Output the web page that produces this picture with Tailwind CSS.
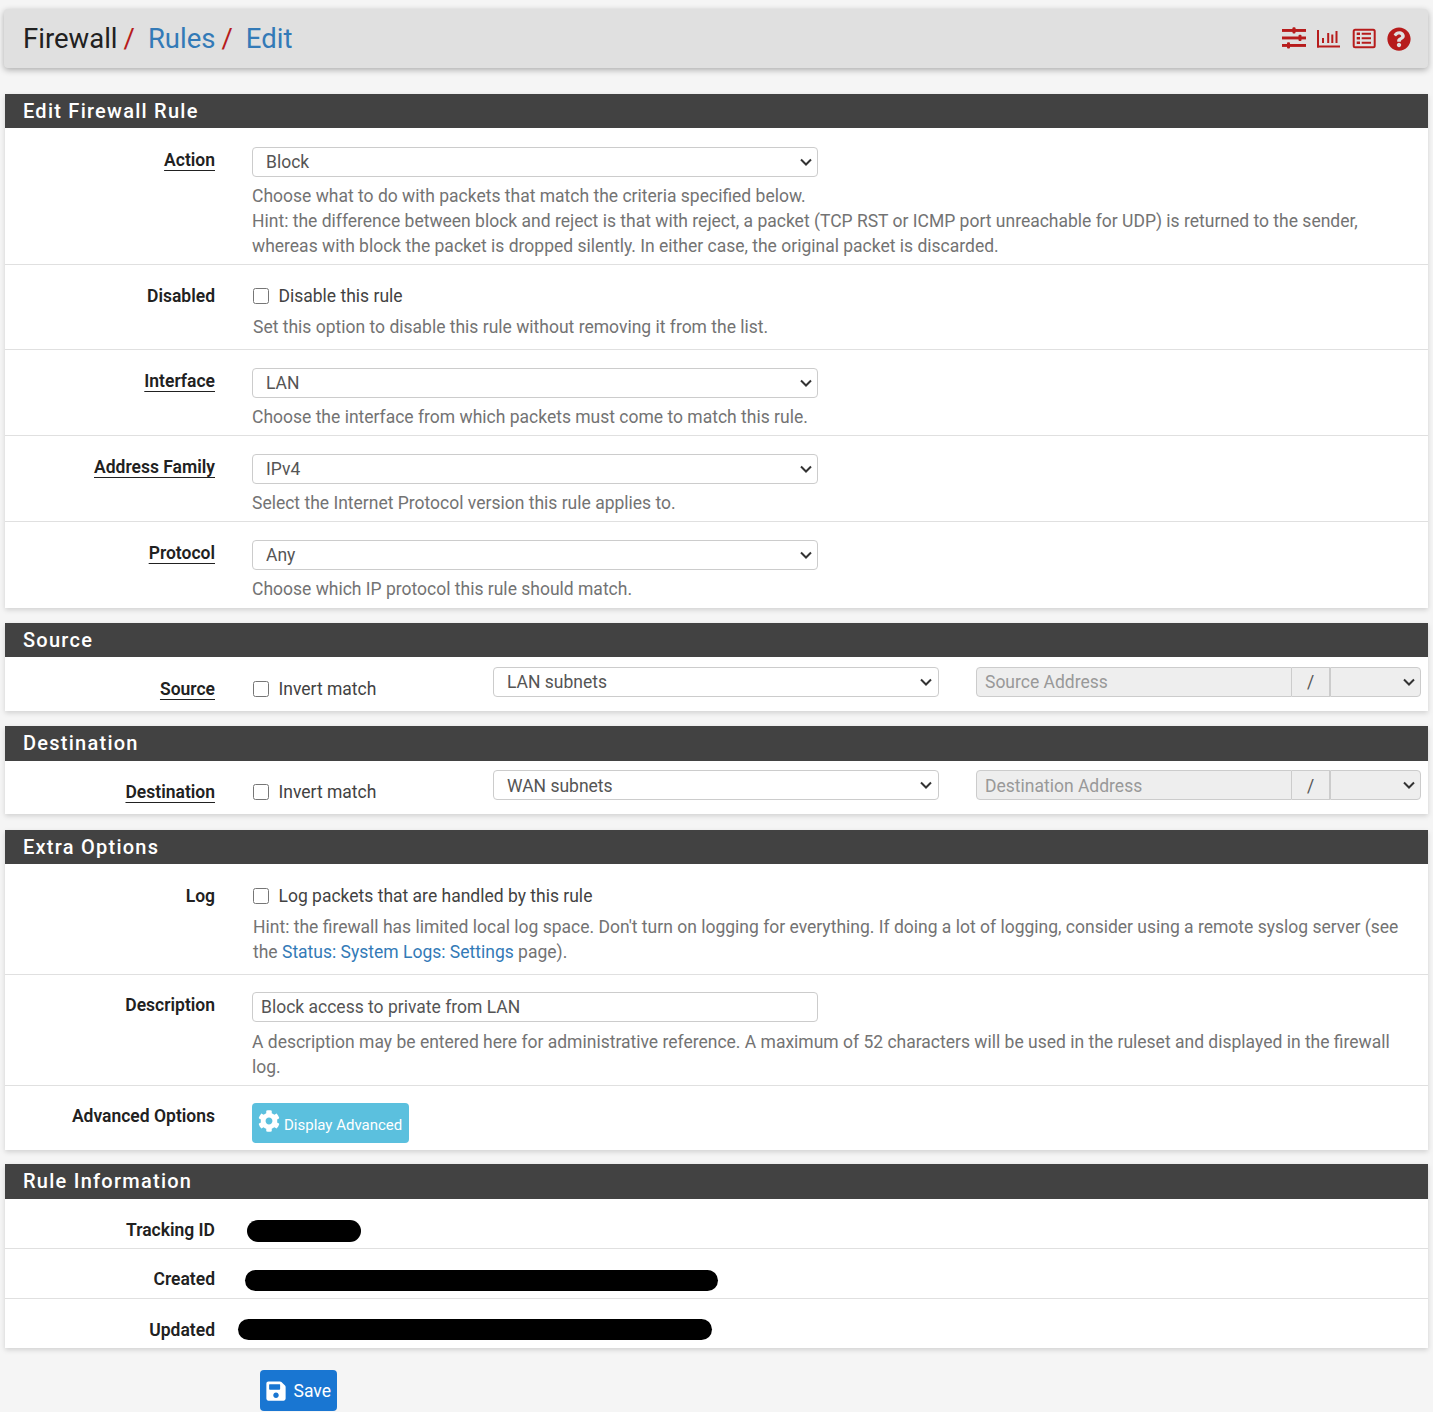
<!DOCTYPE html>
<html lang="en">
<head>
<meta charset="utf-8">
<title>Firewall: Rules: Edit</title>
<script src="https://cdn.jsdelivr.net/npm/@tailwindcss/browser@4"></script>
</head>
<body class="bg-[#f5f5f5] font-['Roboto',sans-serif] text-[17.5px] leading-[25px] text-[#212121] h-[1412px] overflow-hidden">
<div class="pl-[5px] pr-[5px] pt-[9px]">
  <header class="h-[59px] -ml-px bg-[#e0e0e0] rounded-[4px] shadow-[0_2px_6px_rgba(0,0,0,0.3)] flex items-center pl-[19px] pr-[17px] text-[27.5px] font-normal">
    <span class="text-[#212121]">Firewall</span><span class="text-[#b71c1c] ml-[6px]">/</span>
    <a class="text-[#337ab7] ml-[13px]">Rules</a><span class="text-[#b71c1c] ml-[6px]">/</span>
    <a class="text-[#337ab7] ml-[13px]">Edit</a>
    <div class="ml-auto flex items-center gap-[11px] text-[#b71c1c]">
      <svg class="w-[24px] h-[24px]" viewBox="0 0 24 24" fill="currentColor"><rect x="0" y="2" width="24" height="2.900"/><rect x="10.500" y="0.200" width="3" height="6.400" rx="1"/><rect x="0" y="9.500" width="24" height="2.900"/><rect x="16.500" y="7.700" width="3" height="6.400" rx="1"/><rect x="0" y="17" width="24" height="2.900"/><rect x="5" y="15.200" width="3" height="6.400" rx="1"/></svg>
      <svg class="w-[24px] h-[24px]" viewBox="0 0 24 24" fill="currentColor"><rect x="0" y="3" width="2" height="17.500"/><rect x="0" y="18.500" width="23" height="2"/><rect x="5" y="11" width="2" height="5"/><rect x="10.200" y="6" width="2" height="10"/><rect x="14.300" y="7.500" width="2" height="8.500"/><rect x="18.500" y="4" width="2" height="12"/></svg>
      <svg class="w-[24px] h-[24px]" viewBox="0 0 24 24" fill="none" stroke="currentColor"><rect x="1.700" y="2.700" width="21" height="17.600" rx="1.500" stroke-width="2"/><path d="M9.700 6.700h9.300M9.700 11.300h9.300M9.700 15.700h9.300" stroke-width="2"/><path d="M4.700 6.700h3.300M4.700 11.300h3.300M4.700 15.700h3.300" stroke-width="2.400"/></svg>
      <svg class="w-[24px] h-[24px]" viewBox="0 0 512 512" fill="currentColor"><path d="M504 256c0 137-111 248-248 248S8 393 8 256 119 8 256 8s248 111 248 248zM262.700 90c-54.500 0-89.300 23-116.500 63.800-3.500 5.300-2.400 12.400 2.700 16.300l34.700 26.300c5.200 3.900 12.600 3 16.700-2.100 17.900-22.700 30.100-35.800 57.300-35.800 20.400 0 45.700 13.100 45.700 32.900 0 15-12.400 22.700-32.500 34-23.500 13.200-54.600 29.600-54.600 70.600V302c0 6.600 5.400 12 12 12h56c6.600 0 12-5.400 12-12v-1.300c0-28.400 83-29.600 83-106.700 0-58-60.200-102-116.500-102zM256 338c-25.400 0-46 20.600-46 46 0 25.400 20.600 46 46 46s46-20.600 46-46c0-25.400-20.600-46-46-46z"/></svg>
    </div>
  </header>

  <section class="mt-[26px] bg-white shadow-[0_2px_5px_rgba(0,0,0,0.15)] ">
    <h2 class="h-[34px] bg-[#424242] text-white text-[20px] font-medium tracking-[1.25px] leading-[34px] pl-[18px]">Edit Firewall Rule</h2>
    <div class="flex h-[137px] border-b border-[#e0e0e0]">
      <div class="w-[210px] shrink-0 text-right font-semibold pt-[20px]"><span class="underline underline-offset-[4px]">Action</span></div>
      <div class="pl-[37px] pt-[19px]">
        <div class="relative w-[566px]">
          <select class="appearance-none block w-[566px] h-[30px] pl-[13px] border border-[#ccc] rounded-[4px] bg-white text-[#555]"><option>Block</option></select>
          <svg class="absolute right-[6px] top-[11px] w-[12px] h-[8px] pointer-events-none text-[#333]" viewBox="0 0 12 8" fill="none" stroke="currentColor" stroke-width="2"><path d="M1 1.500l5 5 5-5"/></svg>
        </div>
        <p class="mt-[7px] text-[#737373] w-[1150px]">Choose what to do with packets that match the criteria specified below.<br>Hint: the difference between block and reject is that with reject, a packet (TCP RST or ICMP port unreachable for UDP) is returned to the sender, whereas with block the packet is dropped silently. In either case, the original packet is discarded.</p>
      </div>
    </div>
    <div class="flex h-[85px] border-b border-[#e0e0e0]">
      <div class="w-[210px] shrink-0 text-right font-semibold pt-[19px]">Disabled</div>
      <div class="pl-[38px] pt-[19px]">
        <label class="flex items-center text-[#424242]"><input type="checkbox" class="w-[16px] h-[16px] mr-[9.500px] -mt-[2px]">Disable this rule</label>
        <p class="mt-[6px] text-[#737373]">Set this option to disable this rule without removing it from the list.</p>
      </div>
    </div>
    <div class="flex h-[86px] border-b border-[#e0e0e0]">
      <div class="w-[210px] shrink-0 text-right font-semibold pt-[19px]"><span class="underline underline-offset-[4px]">Interface</span></div>
      <div class="pl-[37px] pt-[18px]">
        <div class="relative w-[566px]">
          <select class="appearance-none block w-[566px] h-[30px] pl-[13px] border border-[#ccc] rounded-[4px] bg-white text-[#555]"><option>LAN</option></select>
          <svg class="absolute right-[6px] top-[11px] w-[12px] h-[8px] pointer-events-none text-[#333]" viewBox="0 0 12 8" fill="none" stroke="currentColor" stroke-width="2"><path d="M1 1.500l5 5 5-5"/></svg>
        </div>
        <p class="mt-[7px] text-[#737373]">Choose the interface from which packets must come to match this rule.</p>
      </div>
    </div>
    <div class="flex h-[86px] border-b border-[#e0e0e0]">
      <div class="w-[210px] shrink-0 text-right font-semibold pt-[19px]"><span class="underline underline-offset-[4px]">Address Family</span></div>
      <div class="pl-[37px] pt-[18px]">
        <div class="relative w-[566px]">
          <select class="appearance-none block w-[566px] h-[30px] pl-[13px] border border-[#ccc] rounded-[4px] bg-white text-[#555]"><option>IPv4</option></select>
          <svg class="absolute right-[6px] top-[11px] w-[12px] h-[8px] pointer-events-none text-[#333]" viewBox="0 0 12 8" fill="none" stroke="currentColor" stroke-width="2"><path d="M1 1.500l5 5 5-5"/></svg>
        </div>
        <p class="mt-[7px] text-[#737373]">Select the Internet Protocol version this rule applies to.</p>
      </div>
    </div>
    <div class="flex h-[86px]">
      <div class="w-[210px] shrink-0 text-right font-semibold pt-[19px]"><span class="underline underline-offset-[4px]">Protocol</span></div>
      <div class="pl-[37px] pt-[18px]">
        <div class="relative w-[566px]">
          <select class="appearance-none block w-[566px] h-[30px] pl-[13px] border border-[#ccc] rounded-[4px] bg-white text-[#555]"><option>Any</option></select>
          <svg class="absolute right-[6px] top-[11px] w-[12px] h-[8px] pointer-events-none text-[#333]" viewBox="0 0 12 8" fill="none" stroke="currentColor" stroke-width="2"><path d="M1 1.500l5 5 5-5"/></svg>
        </div>
        <p class="mt-[7px] text-[#737373]">Choose which IP protocol this rule should match.</p>
      </div>
    </div>
  </section>

  <section class="mt-[15px] bg-white shadow-[0_2px_5px_rgba(0,0,0,0.15)]">
    <h2 class="h-[34px] bg-[#424242] text-white text-[20px] font-medium tracking-[1.25px] leading-[34px] pl-[18px]">Source</h2>
    <div class="flex h-[54px] pt-[10px]">
      <div class="w-[210px] shrink-0 text-right font-semibold pt-[10px]"><span class="underline underline-offset-[4px]">Source</span></div>
      <label class="ml-[38px] w-[240px] shrink-0 flex items-center h-[45px] text-[#424242]"><input type="checkbox" class="w-[16px] h-[16px] mr-[9.500px] -mt-[2px]">Invert match</label>
      <div class="relative w-[446px] h-[30px]">
        <select class="appearance-none block w-[446px] h-[30px] pl-[13px] border border-[#ccc] rounded-[4px] bg-white text-[#555]"><option>LAN subnets</option></select>
        <svg class="absolute right-[7px] top-[11px] w-[12px] h-[8px] pointer-events-none text-[#333]" viewBox="0 0 12 8" fill="none" stroke="currentColor" stroke-width="2"><path d="M1 1.500l5 5 5-5"/></svg>
      </div>
      <div class="ml-[37px] w-[445px] h-[30px] flex">
        <input disabled placeholder="Source Address" class="w-[316px] h-[30px] pl-[8px] border border-[#ccc] rounded-l-[4px] bg-[#eee] placeholder:text-[#999]">
        <span class="w-[38px] h-[30px] border-y border-r border-[#ccc] bg-[#eee] text-center text-[#555] leading-[28px]">/</span>
        <div class="relative w-[91px] h-[30px]">
          <select disabled class="appearance-none block w-[91px] h-[30px] border border-[#ccc] rounded-r-[4px] bg-[#eee] text-[#555] opacity-100"><option></option></select>
          <svg class="absolute right-[6px] top-[11px] w-[12px] h-[8px] pointer-events-none text-[#333]" viewBox="0 0 12 8" fill="none" stroke="currentColor" stroke-width="2"><path d="M1 1.500l5 5 5-5"/></svg>
        </div>
      </div>
    </div>
  </section>

  <section class="mt-[15px] bg-white shadow-[0_2px_5px_rgba(0,0,0,0.15)]">
    <h2 class="h-[35px] bg-[#424242] text-white text-[20px] font-medium tracking-[1.25px] leading-[34px] pl-[18px]">Destination</h2>
    <div class="flex h-[53px] pt-[9px]">
      <div class="w-[210px] shrink-0 text-right font-semibold pt-[10px]"><span class="underline underline-offset-[4px]">Destination</span></div>
      <label class="ml-[38px] w-[240px] shrink-0 flex items-center h-[45px] text-[#424242]"><input type="checkbox" class="w-[16px] h-[16px] mr-[9.500px] -mt-[2px]">Invert match</label>
      <div class="relative w-[446px] h-[30px]">
        <select class="appearance-none block w-[446px] h-[30px] pl-[13px] pt-[2px] border border-[#ccc] rounded-[4px] bg-white text-[#555]"><option>WAN subnets</option></select>
        <svg class="absolute right-[7px] top-[11px] w-[12px] h-[8px] pointer-events-none text-[#333]" viewBox="0 0 12 8" fill="none" stroke="currentColor" stroke-width="2"><path d="M1 1.500l5 5 5-5"/></svg>
      </div>
      <div class="ml-[37px] w-[445px] h-[30px] flex">
        <input disabled placeholder="Destination Address" class="w-[316px] h-[30px] pl-[8px] pt-[2px] border border-[#ccc] rounded-l-[4px] bg-[#eee] placeholder:text-[#999]">
        <span class="w-[38px] h-[30px] border-y border-r border-[#ccc] bg-[#eee] text-center text-[#555] leading-[30px]">/</span>
        <div class="relative w-[91px] h-[30px]">
          <select disabled class="appearance-none block w-[91px] h-[30px] border border-[#ccc] rounded-r-[4px] bg-[#eee] text-[#555] opacity-100"><option></option></select>
          <svg class="absolute right-[6px] top-[11px] w-[12px] h-[8px] pointer-events-none text-[#333]" viewBox="0 0 12 8" fill="none" stroke="currentColor" stroke-width="2"><path d="M1 1.500l5 5 5-5"/></svg>
        </div>
      </div>
    </div>
  </section>

  <section class="mt-[16px] bg-white shadow-[0_2px_5px_rgba(0,0,0,0.15)]">
    <h2 class="h-[34px] bg-[#424242] text-white text-[20px] font-medium tracking-[1.25px] leading-[34px] pl-[18px]">Extra Options</h2>
    <div class="flex h-[111px] border-b border-[#e0e0e0]">
      <div class="w-[210px] shrink-0 text-right font-semibold pt-[20px]">Log</div>
      <div class="pl-[38px] pt-[20px]">
        <label class="flex items-center text-[#424242]"><input type="checkbox" class="w-[16px] h-[16px] mr-[9.500px] -mt-[2px]">Log packets that are handled by this rule</label>
        <p class="mt-[6px] text-[#737373] w-[1160px]">Hint: the firewall has limited local log space. Don't turn on logging for everything. If doing a lot of logging, consider using a remote syslog server (see the <a class="text-[#337ab7]">Status: System Logs: Settings</a> page).</p>
      </div>
    </div>
    <div class="flex h-[111px] border-b border-[#e0e0e0]">
      <div class="w-[210px] shrink-0 text-right font-semibold pt-[18px]">Description</div>
      <div class="pl-[37px] pt-[17px]">
        <input value="Block access to private from LAN" class="block w-[566px] h-[30px] pl-[8px] border border-[#ccc] rounded-[4px] bg-white text-[#555]">
        <p class="mt-[8px] text-[#737373] w-[1150px]">A description may be entered here for administrative reference. A maximum of 52 characters will be used in the ruleset and displayed in the firewall log.</p>
      </div>
    </div>
    <div class="flex h-[64px]">
      <div class="w-[210px] shrink-0 text-right font-semibold pt-[18px]">Advanced Options</div>
      <div class="pl-[37px] pt-[17px]">
        <button class="h-[40px] w-[157px] bg-[#5bc0de] rounded-[4px] text-white text-[15px] flex items-center pl-[6px] gap-[4px]">
          <svg class="w-[22px] h-[22px] -mt-[4px]" viewBox="0 0 512 512" fill="currentColor"><path d="M487.400 315.700l-42.600-24.600c4.300-23.200 4.300-47 0-70.200l42.600-24.600c4.900-2.800 7.100-8.600 5.500-14-11.100-35.600-30-67.800-54.700-94.600-3.800-4.100-10-5.100-14.800-2.300L380.800 110c-17.900-15.400-38.500-27.300-60.800-35.100V25.800c0-5.600-3.900-10.500-9.400-11.700-36.700-8.200-74.300-7.800-109.200 0-5.500 1.200-9.400 6.100-9.400 11.700V75c-22.200 7.900-42.800 19.800-60.800 35.100L88.700 85.500c-4.900-2.800-11-1.900-14.800 2.300-24.700 26.700-43.600 58.900-54.700 94.600-1.700 5.400.6 11.200 5.500 14L67.300 221c-4.300 23.200-4.300 47 0 70.200l-42.600 24.600c-4.900 2.800-7.100 8.600-5.500 14 11.100 35.600 30 67.800 54.700 94.600 3.800 4.100 10 5.100 14.800 2.300l42.600-24.600c17.900 15.400 38.500 27.300 60.800 35.100v49.200c0 5.600 3.900 10.500 9.400 11.700 36.700 8.200 74.300 7.800 109.200 0 5.500-1.200 9.400-6.100 9.400-11.700v-49.200c22.200-7.900 42.800-19.800 60.800-35.100l42.600 24.600c4.900 2.800 11 1.900 14.800-2.300 24.700-26.700 43.600-58.900 54.700-94.600 1.500-5.500-.7-11.300-5.600-14.100zM256 336c-44.100 0-80-35.900-80-80s35.900-80 80-80 80 35.900 80 80-35.900 80-80 80z"/></svg>
          <span class="mt-[4px]">Display Advanced</span>
        </button>
      </div>
    </div>
  </section>

  <section class="mt-[14px] bg-white shadow-[0_2px_5px_rgba(0,0,0,0.15)]">
    <h2 class="h-[35px] bg-[#424242] text-white text-[20px] font-medium tracking-[1.25px] leading-[34px] pl-[18px]">Rule Information</h2>
    <div class="flex items-center h-[50px] pt-[12px] border-b border-[#e0e0e0]">
      <div class="w-[210px] shrink-0 text-right font-semibold pt-[2px]">Tracking ID</div>
      <div class="ml-[32px] mt-[2px] w-[114px] h-[22px] rounded-full bg-black"></div>
    </div>
    <div class="flex items-center h-[50px] pt-[12px] border-b border-[#e0e0e0]">
      <div class="w-[210px] shrink-0 text-right font-semibold">Created</div>
      <div class="ml-[30px] mt-[2px] w-[473px] h-[21px] rounded-full bg-black"></div>
    </div>
    <div class="flex items-center h-[49px] pt-[12px]">
      <div class="w-[210px] shrink-0 text-right font-semibold pt-[2px]">Updated</div>
      <div class="ml-[23px] w-[474px] h-[21px] rounded-full bg-black"></div>
    </div>
  </section>

  <button class="mt-[22px] ml-[255px] h-[41px] w-[77px] bg-[#1976d2] rounded-[4px] text-white flex items-center pl-[5px] gap-[6.500px]">
    <svg class="w-[22px] h-[22px]" viewBox="0 0 448 512" fill="currentColor"><path d="M433.900 129.900l-83.900-83.900A48 48 0 0 0 316.100 32H48C21.500 32 0 53.500 0 80v352c0 26.500 21.500 48 48 48h352c26.500 0 48-21.500 48-48V163.900a48 48 0 0 0-14.100-34zM224 416c-35.300 0-64-28.700-64-64 0-35.300 28.700-64 64-64s64 28.700 64 64c0 35.300-28.700 64-64 64zm96-304.500V212c0 6.600-5.400 12-12 12H76c-6.600 0-12-5.400-12-12V108c0-6.600 5.400-12 12-12h228.500c3.200 0 6.200 1.300 8.500 3.500l3.500 3.500c2.200 2.300 3.500 5.300 3.500 8.500z"/></svg>
    <span class="pt-[2px]">Save</span>
  </button>
</div>
</body>
</html>
